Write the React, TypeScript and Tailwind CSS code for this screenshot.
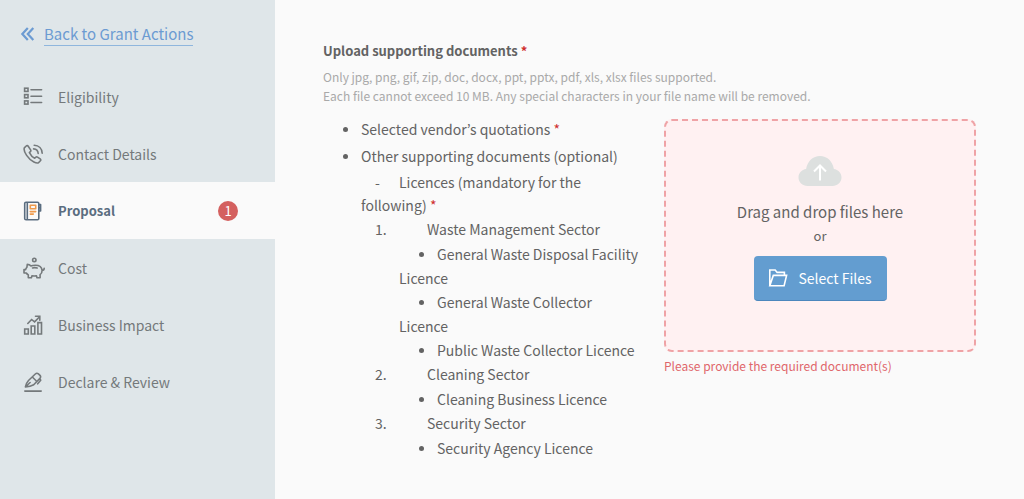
import React from "react";
import type { ReactNode } from "react";

const iconBase = {
  viewBox: "0 0 20 20",
  fill: "none",
  stroke: "currentColor",
  strokeWidth: 1.6,
  strokeLinecap: "round" as const,
  strokeLinejoin: "round" as const,
  "aria-hidden": true,
  className: "size-5 shrink-0",
};

function ListIcon() {
  return (
    <svg {...iconBase} strokeLinejoin="miter">
      <rect x="1.6" y="1.2" width="3.4" height="3.2" />
      <rect x="1.6" y="7.6" width="3.4" height="3.2" />
      <rect x="1.6" y="13.9" width="3.4" height="3.2" />
      <path d="M8 2.8h10.6M8 9.2h10.6M8 15.5h10.6" />
    </svg>
  );
}

function PhoneIcon() {
  return (
    <svg {...iconBase}>
      <path d="M3.2 2 1.3 3.9c-1.2 3.6 4.2 11.6 9.6 14.1 1.9.9 3.5 1.1 4.6.8l1.9-2c.6-.6.5-1.4-.2-1.9l-2.7-1.8c-.6-.4-1.3-.3-1.8.2l-1 1c-1.5-.7-4.4-3.9-5.3-5.7l1-1c.5-.5.6-1.1.2-1.7L5.2 2.2c-.5-.7-1.4-.8-2-.2Z" />
      <path d="M10.6 4.9c2.6.2 4.4 2 4.6 4.6M11.2 1.2c4.6.2 7.800 3.500 8 8" />
    </svg>
  );
}

function NotebookIcon() {
  return (
    <svg {...iconBase}>
      <path d="M3 1.3h11.500c.8 0 1.300.5 1.300 1.300v14.900c0 .8-.5 1.300-1.300 1.300H3c-.8 0-1.300-.5-1.300-1.300V2.600c0-.8.500-1.300 1.300-1.300ZM4.300 1.500v17.200M15.900 3.600h1.700v3.200h-1.700M15.900 6.800h1.700V10h-1.700" />
      <g stroke="#ee9a4d">
        <path d="M7.300 4.300h5.400v3.400H7.300zM7.300 10.600h5.400M7.300 13.100h3" />
      </g>
    </svg>
  );
}

function PiggyIcon() {
  return (
    <svg {...iconBase} viewBox="0 0 22 22" className="-mr-0.5 size-[22px] shrink-0">
      <circle cx="11.3" cy="2.9" r="1.7" />
      <path d="M4.300 7.400 3.900 10.300c-.7.700-1.100 1.500-1.300 2.300H1v3.400h2.300c.5.800 1.200 1.400 2 1.900v2.900h3.100l.5-1.900c1.500.2 3.200.2 4.600 0l.5 1.900h3.100v-3.200c1.300-1 2-2.500 2-4.200 1.300 0 2.100-.8 2.100-2.100M19.100 13.400c-.3-3-3-5.100-6.700-5.100-1.700 0-3.200.1-4.500.600-.9-.9-2.100-1.500-3.600-1.500" />
      <path d="M9.500 10.900c1.500-.4 3.200-.4 4.700.1" />
    </svg>
  );
}

function ImpactIcon() {
  return (
    <svg {...iconBase} strokeLinejoin="miter">
      <path d="M1.700 14h3.600v5H1.700zM8.200 11h3.600v8H8.200zM14.900 7.600h3.600V19h-3.600z" />
      <path d="m4.800 8.500 3.800-4 3 2.400 5-5.200M12.500 1.300h4.300v4" />
    </svg>
  );
}

function SignIcon() {
  return (
    <svg {...iconBase}>
      <path d="M1.800 19.100h16.400" />
      <path d="M2.400 14.900c.5-2.600 1.500-4.700 3.100-6.400L12.300 2c1-.9 2.200-.9 3.100-.1l1.600 1.500c.8.900.8 2-.1 3l-6.200 6.300c-2.200 1.300-4.900 2-8.300 2.200ZM2.800 14.500l4.300-4M9.300 5l4.300 4.200M16.800 6.500l.9 1.700-3 3.600" />
    </svg>
  );
}

function CloudUploadIcon() {
  return (
    <svg viewBox="0 0 44 32" aria-hidden="true" className="h-8 w-11">
      <path
        fill="#dde0df"
        d="M9.500 31C4.500 31 .5 27.200.5 22.500c0-4.500 3.400-8 7.600-8.500C9.400 6.300 15 1 22 1s12.600 5.300 13.900 13c4.200.5 7.600 4 7.600 8.500 0 4.700-4 8.500-9 8.500Z"
      />
      <path fill="none" stroke="#fff" strokeWidth="2" d="M22 25.500V11M16 16.500l6-6 6 6" />
    </svg>
  );
}

function FolderIcon() {
  return (
    <svg {...iconBase} strokeLinejoin="miter">
      <path d="M1.800 17.800V2h5.400l1.900 2.400h7.300v3M1.800 17.800 5.300 7.400h13.300l-2.500 10.400H1.800Z" />
    </svg>
  );
}

type NavEntry = { label: string; icon: ReactNode; active?: boolean; errors?: number };

const navEntries: NavEntry[] = [
  { label: "Eligibility", icon: <ListIcon /> },
  { label: "Contact Details", icon: <PhoneIcon /> },
  { label: "Proposal", icon: <NotebookIcon />, active: true, errors: 1 },
  { label: "Cost", icon: <PiggyIcon /> },
  { label: "Business Impact", icon: <ImpactIcon /> },
  { label: "Declare & Review", icon: <SignIcon /> },
];

function Sidebar() {
  return (
    <aside className="w-[275px] shrink-0 bg-[#dfe6e9]">
      <div className="flex h-[68px] items-center gap-2 pl-5 text-[#6c9bd2]">
        <svg viewBox="0 0 16 16" aria-hidden="true" className="size-4 shrink-0" fill="none" stroke="currentColor" strokeWidth="2.2">
          <path d="M7.800 2 2.300 8l5.500 6M13.300 2 7.800 8l5.500 6" />
        </svg>
        <a href="#actions" className="border-b border-[#8fb6dd] text-[15px] leading-[22px]">
          Back to Grant Actions
        </a>
      </div>
      <nav aria-label="Application sections">
        {navEntries.map((entry) => (
          <a
            key={entry.label}
            href="#section"
            aria-current={entry.active ? "page" : undefined}
            className={
              entry.active
                ? "flex h-[57px] items-center gap-[15px] bg-[#fafafa] pr-[37px] pl-[23px] text-[13px] font-bold text-[#5a6d80]"
                : "flex h-[57px] items-center gap-[15px] pr-[37px] pl-[23px] text-sm text-[#74797b]"
            }
          >
            {entry.icon}
            <span className="flex-1">{entry.label}</span>
            {entry.errors && (
              <span className="flex size-5 items-center justify-center rounded-full bg-[#d4605f] text-[13px] leading-5 font-normal text-white">
                {entry.errors}
              </span>
            )}
          </a>
        ))}
      </nav>
    </aside>
  );
}

function Required() {
  return <span className="text-[#cf2e2e]">*</span>;
}

const sectors = [
  {
    name: "Waste Management Sector",
    licences: [
      "General Waste Disposal Facility Licence",
      "General Waste Collector Licence",
      "Public Waste Collector Licence",
    ],
  },
  { name: "Cleaning Sector", licences: ["Cleaning Business Licence"] },
  { name: "Security Sector", licences: ["Security Agency Licence"] },
];

function Bullet() {
  return (
    <span aria-hidden="true" className="inline-block w-[18px] indent-0">
      <span className="block size-[5px] -translate-y-[3px] rounded-full bg-current" />
    </span>
  );
}

function Requirements() {
  return (
    <ul className="text-sm leading-6">
      <li className="mb-[3px] pl-[38px] -indent-[18px]">
        <Bullet />
        Selected vendor’s quotations <Required />
      </li>
      <li className="pl-[38px]">
        <p className="mb-[3px] -indent-[18px]">
          <Bullet />
          Other supporting documents (optional)
        </p>
        <p className="indent-3.5 leading-[23px]">
          <span className="inline-block w-6 indent-0">-</span>
          Licences (mandatory for the following) <Required />
        </p>
        <ol>
          {sectors.map((sector, index) => (
            <li key={sector.name}>
              <div className="flex pl-3.5">
                <span className="w-[52px]">{index + 1}.</span>
                {sector.name}
              </div>
              <ul className="pt-px pl-[38px]">
                {sector.licences.map((licence) => (
                  <li key={licence} className="indent-5">
                    <Bullet />
                    {licence}
                  </li>
                ))}
              </ul>
            </li>
          ))}
        </ol>
      </li>
    </ul>
  );
}

function DropZone() {
  return (
    <div className="pt-0.5">
      <div className="flex h-[233px] flex-col items-center rounded-lg border-2 border-dashed border-[#efa3a6] bg-[#fff1f2] pt-[34px]">
        <CloudUploadIcon />
        <p className="mt-[13px] text-[15px] leading-6">Drag and drop files here</p>
        <p className="text-[13px] leading-6">or</p>
        <button
          type="button"
          className="mt-2 flex h-[45px] w-[133px] items-center justify-center gap-2.5 rounded-sm border-b border-[#4c87bd] bg-[#639dd0] text-sm text-white"
        >
          <FolderIcon />
          Select Files
        </button>
      </div>
      <p role="alert" className="mt-1 text-xs leading-5 text-[#e0666b]">
        Please provide the required document(s)
      </p>
    </div>
  );
}

export default function App() {
  return (
    <div className="flex min-h-screen bg-[#fafafa] font-['Noto_Sans_CJK_KR','Noto_Sans',sans-serif] text-[#636363]">
      <Sidebar />
      <main className="min-w-0 flex-1 pt-[39px] pr-12 pb-4 pl-12">
        <h1 className="text-[13px] leading-6 font-bold">
          Upload supporting documents <Required />
        </h1>
        <p className="mt-1 text-xs leading-[19px] text-[#a9a9a9]">
          Only jpg, png, gif, zip, doc, docx, ppt, pptx, pdf, xls, xlsx files supported.
          <br />
          Each file cannot exceed 10 MB. Any special characters in your file name will be removed.
        </p>
        <div className="mt-3 grid grid-cols-[1fr_312px] gap-5">
          <Requirements />
          <DropZone />
        </div>
      </main>
    </div>
  );
}
